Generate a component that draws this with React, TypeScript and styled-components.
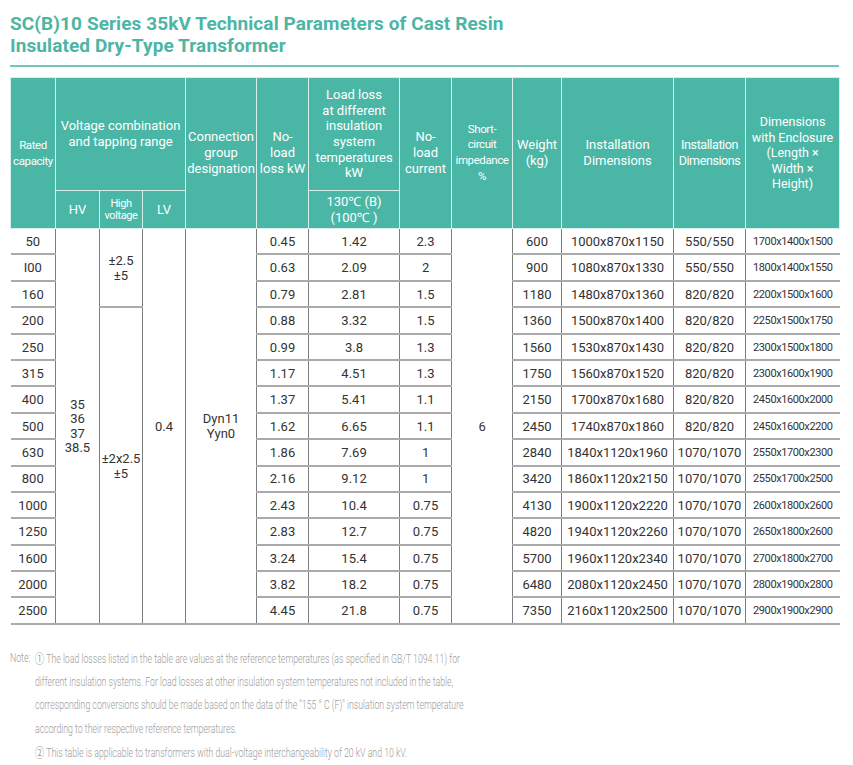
import styled, { createGlobalStyle } from 'styled-components'

const GlobalStyle = createGlobalStyle`
   html, body {
      margin: 0;
      padding: 0;
      background: #ffffff;
   }
   body {
      font-family: Roboto, "Noto Sans", Arial, sans-serif;
   }
`

const TEAL = '#4ab6a5'

const Page = styled.div`
   width: 853px;
   padding: 13px 14px 0 10px;
   box-sizing: border-box;
`

const Title = styled.h1`
   margin: 0;
   font-family: Roboto, "Noto Sans", sans-serif;
   font-size: 19px;
   line-height: 22px;
   letter-spacing: 0.1px;
   font-weight: 700;
   color: #4cb5a3;
`

const Rule = styled.div`
   margin-top: 8px;
   height: 2px;
   width: 829px;
   background: #72c9b9;
`

const Table = styled.table`
   margin-top: 10px;
   width: 829px;
   table-layout: fixed;
   border-collapse: collapse;
   font-family: Roboto, "Noto Sans", sans-serif;
`

const Col = styled.col<{ $w: number }>`
   width: ${(p) => p.$w}px;
`

const Th = styled.th<{ $size?: number; $lh?: number; $tall?: boolean; $narrow?: boolean }>`
   background: ${TEAL};
   color: #ffffff;
   font-weight: 400;
   font-size: ${(p) => p.$size ?? 13}px;
   line-height: ${(p) => p.$lh ?? 15.7}px;
   letter-spacing: ${(p) => (p.$narrow ? '-0.4px' : '0')};
   height: ${(p) => (p.$tall ? 112 : 37)}px;
   padding: 0;
   text-align: center;
   vertical-align: middle;
   border: 1px solid #d6efea;
`

const Td = styled.td<{ $small?: boolean; $first?: boolean; $last?: boolean }>`
   height: 22.4px;
   padding: 2px 0 0;
   text-align: center;
   vertical-align: middle;
   color: #333333;
   font-size: ${(p) => (p.$small ? 11 : 13)}px;
   letter-spacing: ${(p) => (p.$small ? '-0.4px' : '0')};
   line-height: 14.5px;
   border-bottom: 2px solid #ababab;
   border-left: ${(p) => (p.$first ? 'none' : '1px solid #7c7c7c')};
   border-right: ${(p) => (p.$last ? 'none' : '1px solid #7c7c7c')};
`

const Notes = styled.div`
   margin-top: 21px;
   display: flex;
   color: #9d9d9d;
   font-family: Roboto, "Noto Sans", sans-serif;
   font-weight: 300;
   font-size: 12.5px;
   line-height: 23.3px;
   transform: scaleX(0.7);
   transform-origin: left top;
   white-space: nowrap;
`

const NoteLabel = styled.div`
   width: 35.7px;
   flex: none;
`

const NoteBody = styled.div`
   display: flex;
   flex-direction: column;
`

const Circled = styled.span`
   font-family: "Noto Sans CJK SC", "DejaVu Sans", sans-serif;
   font-weight: 400;
   font-size: 13px;
   margin-right: 3px;
`

const widths = [45, 44, 43, 43, 71, 52, 91, 52, 61, 49, 112, 72, 94]

const rows = [
   ['50', '0.45', '1.42', '2.3', '600', '1000x870x1150', '550/550', '1700x1400x1500'],
   ['I00', '0.63', '2.09', '2', '900', '1080x870x1330', '550/550', '1800x1400x1550'],
   ['160', '0.79', '2.81', '1.5', '1180', '1480x870x1360', '820/820', '2200x1500x1600'],
   ['200', '0.88', '3.32', '1.5', '1360', '1500x870x1400', '820/820', '2250x1500x1750'],
   ['250', '0.99', '3.8', '1.3', '1560', '1530x870x1430', '820/820', '2300x1500x1800'],
   ['315', '1.17', '4.51', '1.3', '1750', '1560x870x1520', '820/820', '2300x1600x1900'],
   ['400', '1.37', '5.41', '1.1', '2150', '1700x870x1680', '820/820', '2450x1600x2000'],
   ['500', '1.62', '6.65', '1.1', '2450', '1740x870x1860', '820/820', '2450x1600x2200'],
   ['630', '1.86', '7.69', '1', '2840', '1840x1120x1960', '1070/1070', '2550x1700x2300'],
   ['800', '2.16', '9.12', '1', '3420', '1860x1120x2150', '1070/1070', '2550x1700x2500'],
   ['1000', '2.43', '10.4', '0.75', '4130', '1900x1120x2220', '1070/1070', '2600x1800x2600'],
   ['1250', '2.83', '12.7', '0.75', '4820', '1940x1120x2260', '1070/1070', '2650x1800x2600'],
   ['1600', '3.24', '15.4', '0.75', '5700', '1960x1120x2340', '1070/1070', '2700x1800x2700'],
   ['2000', '3.82', '18.2', '0.75', '6480', '2080x1120x2450', '1070/1070', '2800x1900x2800'],
   ['2500', '4.45', '21.8', '0.75', '7350', '2160x1120x2500', '1070/1070', '2900x1900x2900'],
]

const noteLines: { mark?: string; text: string }[] = [
   {
      mark: '①',
      text: 'The load losses listed in the table are values at the reference temperatures (as specified in GB/T 1094.11) for',
   },
   {
      text: 'different insulation systems. For load losses at other insulation system temperatures not included in the table,',
   },
   {
      text: 'corresponding conversions should be made based on the data of the "155 ° C (F)" insulation system temperature',
   },
   { text: 'according to their respective reference temperatures.' },
   {
      mark: '②',
      text: 'This table is applicable to transformers with dual-voltage interchangeability of 20 kV and 10 kV.',
   },
]

export default function App() {
   return (
      <Page>
         <GlobalStyle />
         <Title>
            SC(B)10 Series 35kV Technical Parameters of Cast Resin
            <br />
            Insulated Dry-Type Transformer
         </Title>
         <Rule />
         <Table>
            <colgroup>
               {widths.map((w, i) => (
                  <Col key={i} $w={w} />
               ))}
            </colgroup>
            <thead>
               <tr>
                  <Th rowSpan={2} $size={11.5} $lh={16} $narrow>
                     Rated
                     <br />
                     capacity
                  </Th>
                  <Th colSpan={3} $tall>
                     Voltage combination
                     <br />
                     and tapping range
                  </Th>
                  <Th rowSpan={2}>
                     Connection
                     <br />
                     group
                     <br />
                     designation
                  </Th>
                  <Th rowSpan={2}>
                     No-
                     <br />
                     load
                     <br />
                     loss kW
                  </Th>
                  <Th $tall>
                     Load loss
                     <br />
                     at different
                     <br />
                     insulation
                     <br />
                     system
                     <br />
                     temperatures
                     <br />
                     kW
                  </Th>
                  <Th rowSpan={2}>
                     No-
                     <br />
                     load
                     <br />
                     current
                  </Th>
                  <Th rowSpan={2} $size={11.5} $lh={15.6} $narrow>
                     Short-
                     <br />
                     circuit
                     <br />
                     impedance
                     <br />%
                  </Th>
                  <Th rowSpan={2}>
                     Weight
                     <br />
                     (kg)
                  </Th>
                  <Th rowSpan={2}>
                     Installation
                     <br />
                     Dimensions
                  </Th>
                  <Th rowSpan={2} $size={12.5} $lh={15.6} $narrow>
                     Installation
                     <br />
                     Dimensions
                  </Th>
                  <Th rowSpan={2} $size={12.5} $lh={15.6}>
                     Dimensions
                     <br />
                     with Enclosure
                     <br />
                     (Length ×
                     <br />
                     Width ×
                     <br />
                     Height)
                  </Th>
               </tr>
               <tr>
                  <Th>HV</Th>
                  <Th $size={11} $lh={12} $narrow>
                     High
                     <br />
                     voltage
                  </Th>
                  <Th>LV</Th>
                  <Th>
                     130℃ (B)
                     <br />
                     (100℃ )
                  </Th>
               </tr>
            </thead>
            <tbody>
               {rows.map((r, i) => (
                  <tr key={r[0]}>
                     <Td $first>{r[0]}</Td>
                     {i === 0 && (
                        <>
                           <Td rowSpan={15}>
                              35
                              <br />
                              36
                              <br />
                              37
                              <br />
                              38.5
                           </Td>
                           <Td rowSpan={3}>
                              ±2.5
                              <br />
                              ±5
                           </Td>
                           <Td rowSpan={15}>0.4</Td>
                           <Td rowSpan={15}>
                              Dyn11
                              <br />
                              Yyn0
                           </Td>
                        </>
                     )}
                     {i === 3 && (
                        <Td rowSpan={12}>
                           ±2x2.5
                           <br />
                           ±5
                        </Td>
                     )}
                     <Td>{r[1]}</Td>
                     <Td>{r[2]}</Td>
                     <Td>{r[3]}</Td>
                     {i === 0 && <Td rowSpan={15}>6</Td>}
                     <Td>{r[4]}</Td>
                     <Td>{r[5]}</Td>
                     <Td>{r[6]}</Td>
                     <Td $small $last>
                        {r[7]}
                     </Td>
                  </tr>
               ))}
            </tbody>
         </Table>
         <Notes>
            <NoteLabel>Note:</NoteLabel>
            <NoteBody>
               {noteLines.map((l) => (
                  <div key={l.text}>
                     {l.mark && <Circled>{l.mark}</Circled>}
                     {l.text}
                  </div>
               ))}
            </NoteBody>
         </Notes>
      </Page>
   )
}
